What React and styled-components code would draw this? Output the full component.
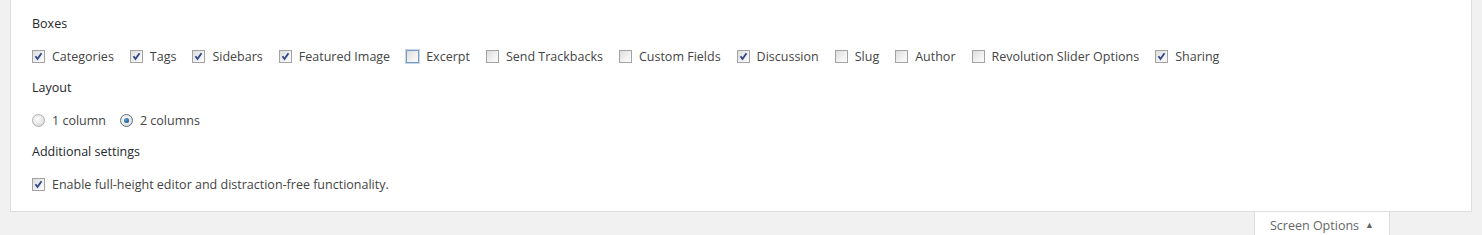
import React from 'react';
import styled, { createGlobalStyle } from 'styled-components';

const GlobalStyle = createGlobalStyle`
  body {
    margin: 0;
    background: #f1f1f1;
    font-family: "Open Sans", "Liberation Sans", sans-serif;
    font-size: 12.5px;
    color: #444;
  }
`;

const Page = styled.div`
  width: 1482px;
  height: 235px;
  overflow: hidden;
`;

const Panel = styled.div`
  margin: 0 10px;
  background: #fff;
  border: 1px solid #ddd;
  border-top: none;
  padding: 8px 21px 11px;
`;

const Heading = styled.div`
  height: 32px;
  line-height: 32px;
  color: #23282d;
`;

const Row = styled.div`
  display: flex;
  align-items: center;
  height: 32px;
`;

const Option = styled.label`
  display: flex;
  align-items: center;
  gap: 7px;
  margin-right: ${(p) => p.$gap || 16}px;
  white-space: nowrap;
  color: #444;
`;

const Box = styled.span`
  width: 13px;
  height: 13px;
  box-sizing: border-box;
  border: 1px solid ${(p) => (p.$focus ? '#7e9ac0' : '#a3a3a3')};
  box-shadow: ${(p) => (p.$focus ? '0 0 0 1px #c6d6ea' : 'none')};
  background: linear-gradient(135deg, #dcdcdc 0%, #f2f2f2 60%, #fbfbfb 100%);
  display: flex;
  align-items: center;
  justify-content: center;
`;

const Radio = styled.span`
  width: 13px;
  height: 13px;
  box-sizing: border-box;
  border-radius: 50%;
  border: 1px solid ${(p) => (p.$on ? '#5f6e80' : '#b0b0b0')};
  background: radial-gradient(circle at 40% 35%, #fdfdfd 0%, #e4e4e4 60%, #cfcfcf 100%);
  display: flex;
  align-items: center;
  justify-content: center;
`;

const Dot = styled.span`
  width: 5px;
  height: 5px;
  border-radius: 50%;
  background: radial-gradient(circle at 35% 35%, #5aa0d8, #0b3f70);
`;

const TabRow = styled.div`
  display: flex;
  justify-content: flex-end;
  padding-right: 92px;
`;

const Tab = styled.button`
  width: 136px;
  height: 30px;
  background: #fff;
  border: 1px solid #ddd;
  border-top: none;
  font: inherit;
  color: #666;
  display: flex;
  align-items: flex-start;
  padding: 5px 0 0 15px;
  gap: 6px;
`;

const Arrow = styled.span`
  font-size: 9px;
  color: #666;
  line-height: 16px;
`;

function Check({ checked, focus }) {
  return (
    <Box $focus={focus}>
      {checked && (
        <svg width="9" height="9" viewBox="0 0 9 9">
          <path d="M1.5 4.3 L3.5 7 L7.5 1.3" fill="none" stroke="#34488a" strokeWidth="1.9" />
        </svg>
      )}
    </Box>
  );
}

const boxes = [
  ['Categories', true],
  ['Tags', true],
  ['Sidebars', true],
  ['Featured Image', true],
  ['Excerpt', false, true],
  ['Send Trackbacks', false],
  ['Custom Fields', false],
  ['Discussion', true],
  ['Slug', false],
  ['Author', false],
  ['Revolution Slider Options', false],
  ['Sharing', true],
];

export default function App() {
  return (
    <Page>
      <GlobalStyle />
      <Panel>
        <Heading>Boxes</Heading>
        <Row>
          {boxes.map(([label, checked, focus]) => (
            <Option key={label}>
              <Check checked={checked} focus={focus} />
              {label}
            </Option>
          ))}
        </Row>
        <Heading>Layout</Heading>
        <Row>
          <Option $gap={14}>
            <Radio />
            1 column
          </Option>
          <Option>
            <Radio $on>
              <Dot />
            </Radio>
            2 columns
          </Option>
        </Row>
        <Heading>Additional settings</Heading>
        <Row>
          <Option>
            <Check checked />
            Enable full-height editor and distraction-free functionality.
          </Option>
        </Row>
      </Panel>
      <TabRow>
        <Tab>
          Screen Options
          <Arrow>▲</Arrow>
        </Tab>
      </TabRow>
    </Page>
  );
}
